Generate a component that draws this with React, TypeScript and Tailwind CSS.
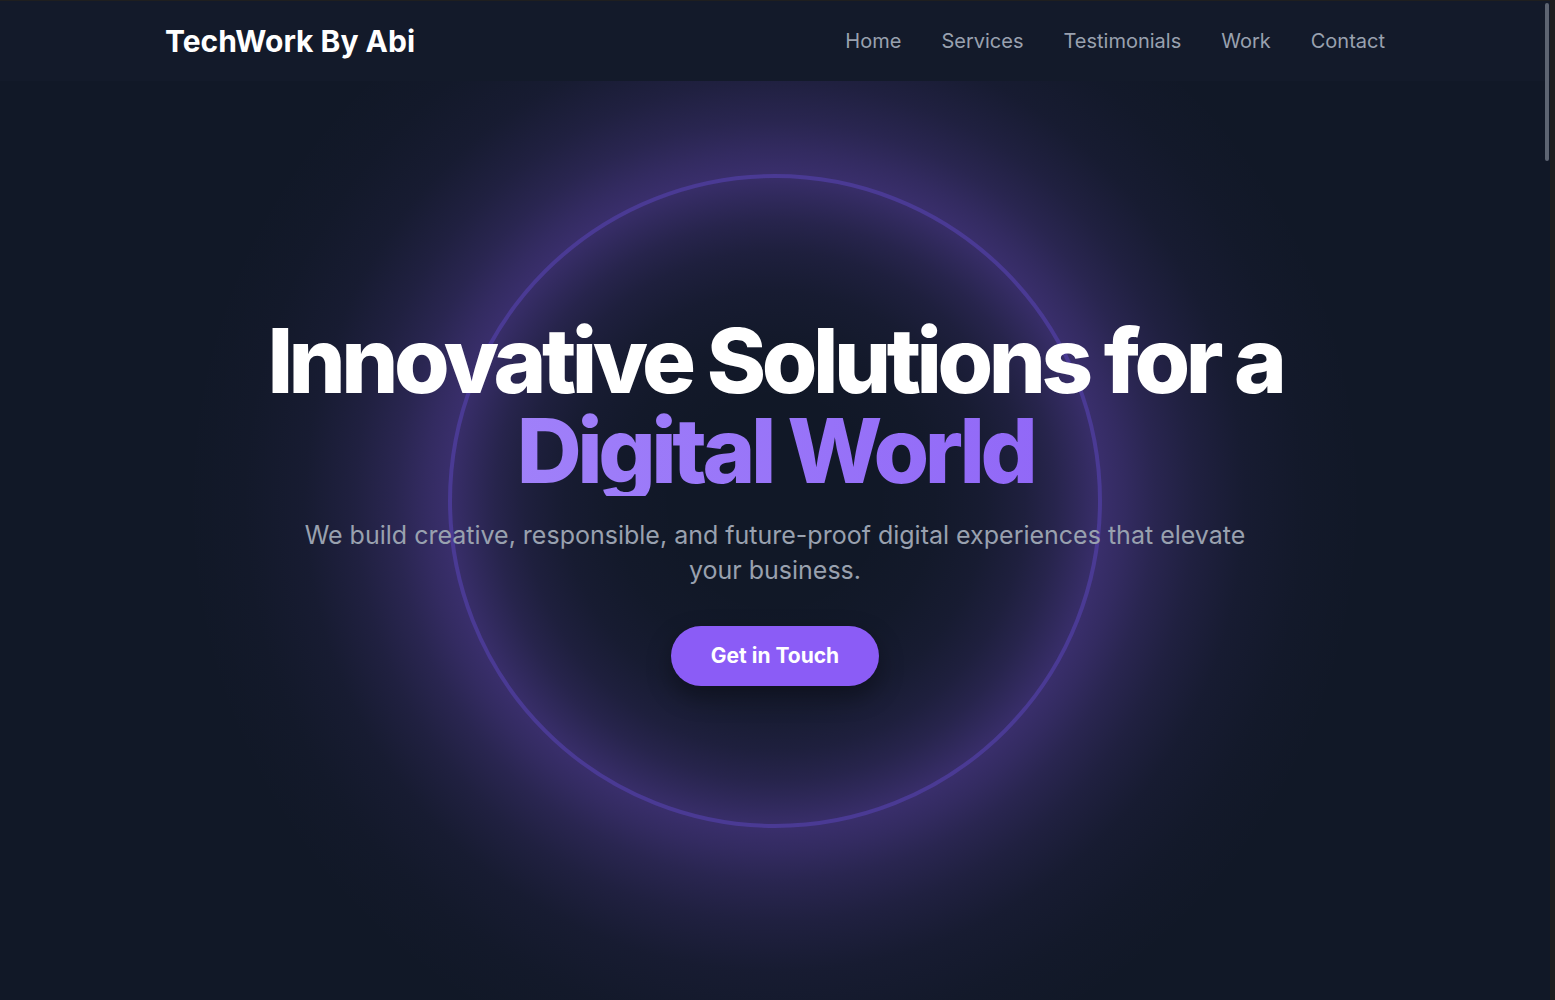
import React from "react";

const navItems = ["Home", "Services", "Testimonials", "Work", "Contact"];

export default function App() {
  return (
    <div className="h-screen overflow-y-scroll border-t border-r-[5px] border-[#1f1f1f] bg-[#111827] font-['Inter','Noto_Sans',sans-serif] [&::-webkit-scrollbar]:w-[5px] [&::-webkit-scrollbar-track]:bg-[#111827] [&::-webkit-scrollbar-thumb]:rounded-sm [&::-webkit-scrollbar-thumb]:bg-[#5b6270]">
      <header className="fixed left-0 right-[5px] top-px z-20 h-20 bg-[#131a2a]">
        <div className="mx-auto flex h-full max-w-[1284px] items-center justify-between px-8">
          <a className="text-[30px] font-bold text-white">TechWork By Abi</a>
          <nav className="flex items-center gap-10">
            {navItems.map((item) => (
              <a key={item} className="text-xl text-gray-400">
                {item}
              </a>
            ))}
          </nav>
        </div>
      </header>

      <div className="pointer-events-none fixed right-[6px] top-[3px] z-30 h-[158px] w-[4px] rounded-[2px] bg-[#5d6472]" />

      <main>
        <section className="relative flex h-[999px] items-center justify-center overflow-hidden">
          <div className="pointer-events-none absolute left-1/2 top-1/2 h-[1240px] w-[1240px] -translate-x-1/2 -translate-y-1/2 bg-[radial-gradient(circle,rgba(139,92,246,0)_100px,rgba(139,92,246,0.015)_160px,rgba(139,92,246,0.05)_210px,rgba(139,92,246,0.11)_250px,rgba(139,92,246,0.18)_280px,rgba(139,92,246,0.26)_305px,rgba(139,92,246,0.33)_327px,rgba(139,92,246,0.28)_350px,rgba(139,92,246,0.2)_380px,rgba(139,92,246,0.12)_420px,rgba(139,92,246,0.05)_470px,rgba(139,92,246,0.015)_530px,rgba(139,92,246,0)_590px)]" />
          <div className="pointer-events-none absolute left-1/2 top-1/2 h-[654px] w-[654px] -translate-x-1/2 -translate-y-1/2 rounded-full border-4 border-[#4a3a94]" />
          <div className="relative z-10 flex flex-col items-center px-4 text-center">
            <h1 className="text-[90px] font-extrabold leading-none tracking-[-0.05em] text-white">
              Innovative Solutions for a
              <span className="block bg-gradient-to-r from-[#a78bfa] to-[#8b5cf6] bg-clip-text text-transparent">
                Digital World
              </span>
            </h1>
            <p className="mt-[22px] max-w-[960px] text-[25px] leading-[1.4] text-gray-400">
              We build creative, responsible, and future-proof digital experiences that elevate your business.
            </p>
            <a className="mt-[38px] rounded-full bg-[#8b5cf6] px-10 py-4 text-[21px] font-bold leading-7 text-white shadow-[0_10px_25px_rgba(0,0,0,0.35)]">
              Get in Touch
            </a>
          </div>
        </section>
        <div className="h-[5300px]" />
      </main>
    </div>
  );
}
